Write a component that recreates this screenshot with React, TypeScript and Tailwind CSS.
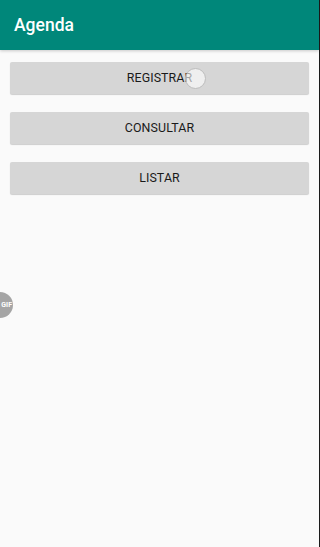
import React from "react";

const font = { fontFamily: 'Roboto, "Noto Sans", "Liberation Sans", sans-serif' };

function Btn({ label, children }: { label: string; children?: React.ReactNode }) {
  return (
    <div className="relative h-[32px] bg-[#d6d6d6] rounded-[2px] shadow-[0_1px_1px_rgba(0,0,0,0.18)] flex items-center justify-center">
      <span className="text-[12.4px] text-[#1a1a1a] tracking-[0.1px] font-normal pt-[1px]">{label}</span>
      {children}
    </div>
  );
}

export default function App() {
  return (
    <div className="relative w-[320px] h-[547px] bg-[#fafafa] overflow-hidden" style={font}>
      <div className="flex h-full">
        <div className="flex-1 flex flex-col">
          <div className="h-[50px] bg-[#00877a] flex items-center pl-[14px] pt-[1px] shadow-[0_1px_3px_rgba(0,0,0,0.2)] relative z-10">
            <span className="text-white text-[17.5px] font-medium leading-none">Agenda</span>
          </div>
          <div className="flex flex-col gap-[18px] px-[10px] pt-[12px]">
            <Btn label="REGISTRAR">
              <div className="absolute left-[175px] top-[6px] w-[21px] h-[21px] rounded-full bg-white/60 border border-[#bdbdbd]" />
            </Btn>
            <Btn label="CONSULTAR" />
            <Btn label="LISTAR" />
          </div>
        </div>
        <div className="w-[1px] bg-[#1a1a1a]" />
      </div>
      <div className="absolute left-[-13px] top-[292px] w-[26px] h-[26px] rounded-full bg-[#a5a5a5] flex items-center justify-end pr-[1px]">
        <span className="text-white text-[7px] font-bold leading-none">GIF</span>
      </div>
    </div>
  );
}
